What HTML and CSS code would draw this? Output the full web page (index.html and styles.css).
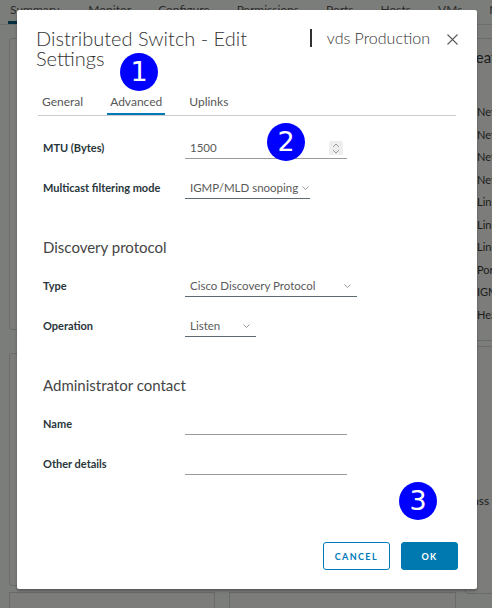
FILE: index.html
```html
<!DOCTYPE html>
<html lang="en">
<head>
<meta charset="utf-8">
<title>Distributed Switch - Edit Settings</title>
<link rel="stylesheet" href="styles.css">
</head>
<body>
<div class="app">
  <nav class="nav">
    <a class="nav-item active">Summary</a>
    <a class="nav-item">Monitor</a>
    <a class="nav-item">Configure</a>
    <a class="nav-item">Permissions</a>
    <a class="nav-item">Ports</a>
    <a class="nav-item">Hosts</a>
    <a class="nav-item">VMs</a>
    <a class="nav-item">Networks</a>
  </nav>
  <main class="content">
    <div class="col col-left">
      <section class="card card-a"></section>
      <section class="card card-b"></section>
      <div class="bottom-row">
        <section class="card card-c"></section>
        <section class="card card-d"></section>
      </div>
    </div>
    <div class="col col-right">
      <section class="card card-feat">
        <h3 class="feat-title">Features</h3>
        <ul class="feat-list">
          <li>Network I/O Control</li>
          <li>NetFlow</li>
          <li>Network Offloads</li>
          <li>Network Health</li>
          <li>Link Discovery</li>
          <li>Link Layer</li>
          <li>Link aggregation</li>
          <li>Port mirroring</li>
          <li>IGMP/MLD snooping</li>
          <li>Health check</li>
        </ul>
      </section>
      <section class="card card-class">
        <p class="class-text">Class</p>
      </section>
    </div>
  </main>
</div>
<div class="backdrop"></div>

<div class="modal" role="dialog">
  <header class="modal-header">
    <h2 class="modal-title">Distributed Switch - Edit Settings</h2>
    <div class="modal-meta">
      <span class="meta-bar"></span>
      <span class="meta-name">vds Production</span>
      <svg class="close" width="11" height="11" viewBox="0 0 11 11"><path d="M0.5 0.5 L10.5 10.5 M10.5 0.5 L0.5 10.5" stroke="#5b5b5b" stroke-width="1.1" fill="none"/></svg>
    </div>
  </header>

  <div class="tabs">
    <a class="tab">General</a>
    <a class="tab active">Advanced</a>
    <a class="tab">Uplinks</a>
  </div>

  <form class="form">
    <div class="row">
      <label class="label">MTU (Bytes)</label>
      <div class="field input w-162">
        <span class="value">1500</span>
        <span class="spinner">
          <svg width="8" height="11" viewBox="0 0 8 11"><path d="M1 4 L4 1 L7 4 M1 7 L4 10 L7 7" stroke="#9a9a9a" stroke-width="1" fill="none"/></svg>
        </span>
      </div>
    </div>
    <div class="row">
      <label class="label">Multicast filtering mode</label>
      <div class="field select w-125">
        <span class="value">IGMP/MLD snooping</span>
        <svg class="chev" width="7" height="4" viewBox="0 0 7 4"><path d="M0.5 0.5 L3.5 3.5 L6.5 0.5" stroke="#9a9a9a" stroke-width="1" fill="none"/></svg>
      </div>
    </div>

    <h3 class="section">Discovery protocol</h3>
    <div class="row">
      <label class="label">Type</label>
      <div class="field select w-172">
        <span class="value">Cisco Discovery Protocol</span>
        <svg class="chev" width="7" height="4" viewBox="0 0 7 4"><path d="M0.5 0.5 L3.5 3.5 L6.5 0.5" stroke="#9a9a9a" stroke-width="1" fill="none"/></svg>
      </div>
    </div>
    <div class="row">
      <label class="label">Operation</label>
      <div class="field select w-71">
        <span class="value">Listen</span>
        <svg class="chev" width="7" height="4" viewBox="0 0 7 4"><path d="M0.5 0.5 L3.5 3.5 L6.5 0.5" stroke="#9a9a9a" stroke-width="1" fill="none"/></svg>
      </div>
    </div>

    <h3 class="section">Administrator contact</h3>
    <div class="row">
      <label class="label">Name</label>
      <div class="field input w-162"><span class="value"></span></div>
    </div>
    <div class="row">
      <label class="label">Other details</label>
      <div class="field input w-162"><span class="value"></span></div>
    </div>
  </form>

  <footer class="modal-footer">
    <button class="btn btn-outline" type="button">Cancel</button>
    <button class="btn btn-primary" type="button">OK</button>
  </footer>
</div>

<span class="badge badge-1">1</span>
<span class="badge badge-2">2</span>
<span class="badge badge-3">3</span>
</body>
</html>
```

FILE: styles.css
```css
* { box-sizing: border-box; }

body {
  margin: 0;
  width: 492px;
  height: 608px;
  overflow: hidden;
  position: relative;
  background: #f6faf4;
  font-family: Lato, "Noto Sans", sans-serif;
  color: #313131;
}

/* ---------- background application ---------- */
.app {
  width: 492px;
  height: 608px;
  overflow: hidden;
}

.nav {
  display: flex;
  gap: 27px;
  height: 25px;
  padding-left: 10px;
  border-bottom: 1px solid #dcdfda;
  white-space: nowrap;
}

.nav-item {
  font-size: 12px;
  line-height: 16px;
  padding-top: 2px;
  color: #565656;
  height: 24px;
}

.nav-item.active {
  border-bottom: 3px solid #0a5e7e;
  margin-left: -2px;
  padding: 2px 2px 0;
}

.content {
  display: grid;
  grid-template-columns: 447px 200px;
  column-gap: 9px;
  padding: 13px 0 0 9px;
}

.col {
  display: flex;
  flex-direction: column;
}

.card {
  background: #f8fbf6;
  border: 1px solid #d4d8d2;
  border-radius: 3px;
}

.card-a { height: 292px; }
.card-b { height: 233px; margin-top: 23px; }

.bottom-row {
  display: grid;
  grid-template-columns: 206px 1fr;
  column-gap: 14px;
  margin-top: 6px;
}

.card-c, .card-d { height: 30px; border-radius: 0; }

.card-feat {
  height: 303px;
  padding: 9px 0 0 2px;
}

.feat-title {
  margin: 0 0 35px;
  font-size: 15px;
  line-height: 18px;
  font-weight: 400;
  color: #3a3a3a;
}

.feat-list {
  list-style: none;
  margin: 0;
  padding: 0 0 0 9px;
  font-size: 11px;
  line-height: 22.5px;
  color: #3a3a3a;
  white-space: nowrap;
}

.card-class {
  height: 248px;
  margin-top: 5px;
  padding-top: 146px;
  padding-left: 0;
}

.class-text {
  margin: 0 0 0 -4px;
  font-size: 12px;
  color: #3a3a3a;
}

.backdrop {
  position: absolute;
  inset: 0;
  background: rgba(0, 0, 0, 0.5);
}

/* ---------- modal ---------- */
.modal {
  position: absolute;
  left: 17px;
  top: 10px;
  width: 460px;
  height: 579px;
  background: #fff;
  border-radius: 2px;
  box-shadow: 0 2px 3px rgba(0, 0, 0, 0.3);
  display: flex;
  flex-direction: column;
  padding: 18px 19px 19px 19px;
}

.modal-header {
  display: flex;
  align-items: flex-start;
}

.modal-title {
  margin: 0;
  width: 250px;
  font-size: 20px;
  line-height: 20px;
  font-weight: 300;
  color: #333333;
}

.modal-meta {
  margin-left: auto;
  display: flex;
  align-items: center;
  height: 18px;
  margin-top: 1px;
}

.meta-bar {
  width: 1.5px;
  height: 18px;
  background: #313131;
}

.meta-name {
  margin-left: 15px;
  font-size: 16px;
  line-height: 18px;
  font-weight: 300;
  color: #333333;
}

.close {
  margin-left: 17px;
  margin-top: 2px;
}

.tabs {
  display: flex;
  gap: 21px;
  margin: 26px 2px 0 2px;
  padding-left: 1px;
  border-bottom: 1px solid #cccccc;
}

.tab {
  font-size: 12px;
  line-height: 16px;
  padding: 0 3px 3px;
  color: #565656;
  border-bottom: 2px solid transparent;
}

.tab.active {
  border-bottom-color: #0079b8;
}

/* ---------- form ---------- */
.form {
  margin-top: 3px;
  padding-left: 7px;
}

.row {
  display: grid;
  grid-template-columns: 142px auto;
  justify-items: start;
  align-items: end;
  height: 40px;
}

.label {
  font-size: 11px;
  font-weight: 700;
  line-height: 16px;
  padding-bottom: 3px;
  color: #29363b;
}

.field {
  display: flex;
  align-items: center;
  justify-content: space-between;
  height: 19px;
  padding: 0 6px 2px 5px;
  border-bottom: 1px solid #9a9a9a;
  font-size: 11.5px;
  line-height: 16px;
  color: #5a5a5a;
  white-space: nowrap;
}

.value {
  white-space: nowrap;
}

.field.select {
  border-bottom-color: #5e6b71;
  padding-right: 6px;
}

.field.input {
  padding-right: 4px;
}

.w-162 { width: 162px; }
.w-125 { width: 125px; }
.w-172 { width: 172px; }
.w-71 { width: 71px; }

.spinner {
  width: 14px;
  height: 14px;
  background: #eeeeee;
  border-radius: 2px;
  display: flex;
  align-items: center;
  justify-content: center;
}

.chev { flex: none; margin-left: 4px; }

.section {
  margin: 39px 0 1px;
  font-size: 15px;
  line-height: 18px;
  font-weight: 400;
  color: #454545;
}

/* ---------- footer ---------- */
.modal-footer {
  margin-top: auto;
  display: flex;
  justify-content: flex-end;
  gap: 11px;
}

.btn {
  height: 28px;
  min-width: 57px;
  padding: 0 11px;
  border: 1px solid #0079b8;
  border-radius: 3px;
  font-family: Lato, "Noto Sans", sans-serif;
  font-size: 9px;
  font-weight: 700;
  letter-spacing: 1.4px;
  text-transform: uppercase;
}

.btn-outline {
  background: #fff;
  color: #0079b8;
}

.btn-primary {
  background: #0079b0;
  border-color: #0079b0;
  color: #fff;
}

/* ---------- annotation badges ---------- */
.badge {
  position: absolute;
  width: 38px;
  height: 38px;
  border-radius: 50%;
  background: #0000ff;
  color: #fff;
  font-family: "DejaVu Sans", sans-serif;
  font-size: 27px;
  line-height: 38px;
  text-align: center;
}

.badge-1 { left: 120px; top: 53px; }
.badge-2 { left: 267px; top: 123px; }
.badge-3 { left: 399px; top: 482px; }
```
